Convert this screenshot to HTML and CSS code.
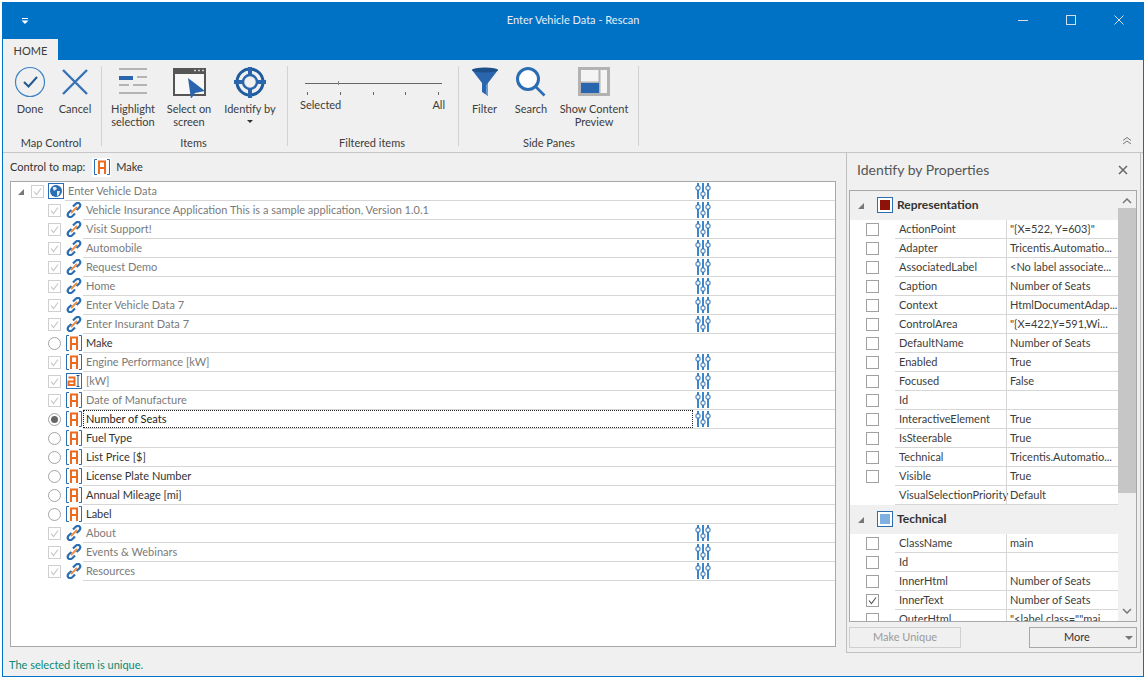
FILE: index.html
```html
<!DOCTYPE html>
<html lang="en">
<head>
<meta charset="utf-8">
<title>Enter Vehicle Data - Rescan</title>
<link rel="stylesheet" href="styles.css">
</head>
<body>
<svg class="defs" width="0" height="0">
  <symbol id="i-a" viewBox="0 0 16 16">
    <path d="M3 .5H.5v15H3M13 .5h2.500v15H13" fill="none" stroke="#2a6db3"/>
    <path d="M5 15V2.500h6V15M5 9h6" fill="none" stroke="#ee6a1f" stroke-width="2"/>
  </symbol>
  <symbol id="i-t" viewBox="0 0 16 16">
    <rect x=".5" y=".5" width="15" height="15" fill="none" stroke="#2a6db3"/>
    <path d="M2.500 4.500h6V12h-6V8.500h6" fill="none" stroke="#ee6a1f" stroke-width="2"/>
    <path d="M10.500 2.500h3M12 2.500v11M10.500 13.500h3" fill="none" stroke="#1f4e80"/>
  </symbol>
  <symbol id="i-link" viewBox="0 0 16 16">
    <path d="M7 4.500 9.500 2q2.300-2 4-.5t-.2 4L10.500 8" fill="none" stroke="#2a6db3" stroke-width="2.200"/>
    <path d="M9 11.500 6.500 14q-2.300 2-4 .5t.2-4L5.500 8" fill="none" stroke="#2a6db3" stroke-width="2.200"/>
    <path d="m5 11 6-6" stroke="#ee8a3a" stroke-width="1.800"/>
  </symbol>
  <symbol id="i-tune" viewBox="0 0 16 18">
    <path d="M3 1v16M8 1v16M13 1v16" stroke="#3a86c8" stroke-width="2"/>
    <g fill="#fff" stroke="#2a6db3"><rect x="1" y="4" width="4" height="4" rx="1"/><rect x="6" y="10" width="4" height="4" rx="1"/><rect x="11" y="4" width="4" height="4" rx="1"/></g>
  </symbol>
  <symbol id="i-chk" viewBox="0 0 13 13">
    <path d="M3 6.500 5.500 9.500 10 3.500" fill="none" stroke="currentColor" stroke-width="1.100"/>
  </symbol>
</svg>
<div class="window">
  <header class="titlebar">
    <div class="qat"><svg width="8" height="7" viewBox="0 0 8 7"><path d="M1 .5h6" stroke="#fff"/><path d="M.5 2.500h7L4 6z" fill="#fff"/></svg></div>
    <div class="title">Enter Vehicle Data - Rescan</div>
    <div class="winbtns">
      <div class="winbtn"><svg width="12" height="12" viewBox="0 0 12 12"><path d="M1 6.500h10" stroke="#d5dde6"/></svg></div>
      <div class="winbtn"><svg width="12" height="12" viewBox="0 0 12 12"><rect x="1.500" y="1.500" width="9" height="9" fill="none" stroke="#d5dde6"/></svg></div>
      <div class="winbtn"><svg width="12" height="12" viewBox="0 0 12 12"><path d="m1.500 1.500 9 9m0-9-9 9" stroke="#d5dde6"/></svg></div>
    </div>
  </header>
  <div class="tabrow"><div class="tab">HOME</div></div>

  <section class="ribbon">
    <div class="group g1">
      <div class="btns">
        <div class="btn w-done"><svg class="ic" width="32" height="32" viewBox="0 0 32 32"><circle cx="16" cy="16" r="14.500" fill="none" stroke="#3d84c6" stroke-width="1.200"/><path d="m10 16 4.500 4.500L23 11" fill="none" stroke="#23598f" stroke-width="2"/></svg><span>Done</span></div>
        <div class="btn w-cancel"><svg class="ic" width="32" height="32" viewBox="0 0 32 32"><path d="m4 4 24 24M28 4 4 28" stroke="#3674b5" stroke-width="2.400"/></svg><span>Cancel</span></div>
      </div>
      <div class="glabel">Map Control</div>
    </div>
    <div class="group g2">
      <div class="btns">
        <div class="btn w-high"><svg class="ic" width="32" height="32" viewBox="0 0 32 32"><path d="M2 3h28M20 11h10M2 19h10M16 19h14M2 27h28" stroke="#b4b4b4" stroke-width="2"/><rect x="2" y="10" width="14" height="4" fill="#2a66ae"/></svg><span>Highlight<br>selection</span></div>
        <div class="btn w-sel"><svg class="ic" width="34" height="32" viewBox="0 0 34 32"><rect x="2" y="3" width="31" height="26" fill="#f7f7f7" stroke="#555" stroke-width="2"/><rect x="2" y="2" width="31" height="6" fill="#555"/><path d="M22 4.500h2M26 4.500h2M30 4.500h2" stroke="#ccc" stroke-width="1.500"/><path d="m16 12 17 13-10 2-4 6z" fill="#2a66ae"/></svg><span>Select on<br>screen</span></div>
        <div class="btn w-id"><svg class="ic" width="34" height="32" viewBox="0 0 34 32"><circle cx="17" cy="16" r="13" fill="none" stroke="#1f5a9c" stroke-width="3"/><circle cx="17" cy="16" r="7" fill="none" stroke="#2a66ae" stroke-width="2.500"/><path d="M17 1v9M17 22v10M1 16h9M24 16h9" stroke="#2a66ae" stroke-width="4"/></svg><span>Identify by</span><i class="caret"></i></div>
      </div>
      <div class="glabel">Items</div>
    </div>
    <div class="group g3">
      <div class="slider">
        <div class="track"><i class="thumb"></i></div>
        <div class="ticks"><i></i><i></i><i></i><i></i><i></i></div>
        <div class="ends"><span>Selected</span><span>All</span></div>
      </div>
      <div class="glabel">Filtered items</div>
    </div>
    <div class="group g4">
      <div class="btns">
        <div class="btn w-filter"><svg class="ic" width="30" height="32" viewBox="0 0 30 32"><path d="M2 4h26L18 17v13l-6-4V17z" fill="#2a66ae"/><ellipse cx="15" cy="4" rx="13" ry="2.500" fill="#1d4f88"/><path d="M18 17v13l-2-2V19z" fill="#6a9bd0"/></svg><span>Filter</span></div>
        <div class="btn w-search"><svg class="ic" width="32" height="32" viewBox="0 0 32 32"><circle cx="13" cy="13" r="10.500" fill="#fff" stroke="#2a6db3" stroke-width="3"/><path d="m20.500 20.500 9 9" stroke="#2a6db3" stroke-width="2.600"/></svg><span>Search</span></div>
        <div class="btn w-show"><svg class="ic" width="32" height="32" viewBox="0 0 32 32"><rect x="1.500" y="2.500" width="29" height="26" fill="#f4f4f4" stroke="#b2b2b2" stroke-width="3"/><path d="M21.500 3v25M3 16.500h18" stroke="#b2b2b2" stroke-width="2"/><rect x="3" y="17" width="18" height="10" fill="#2a66ae"/></svg><span>Show Content<br>Preview</span></div>
      </div>
      <div class="glabel">Side Panes</div>
    </div>
    <svg class="collapse" width="10" height="8" viewBox="0 0 10 8"><path d="m1 3.500 4-3 4 3M1 7l4-3 4 3" fill="none" stroke="#777"/></svg>
  </section>

  <main class="body">
    <div class="left">
      <div class="mapline"><span>Control to map:</span><span class="mapicon"><svg width="16" height="16"><use href="#i-a"/></svg></span><span>Make</span></div>
      <div class="tree">
        <div class="row root"><i class="exp"></i><i class="chk"><svg width="13" height="13"><use href="#i-chk"/></svg></i><span class="globe"><svg width="16" height="16" viewBox="0 0 16 16"><rect x=".5" y=".5" width="15" height="15" fill="#fff" stroke="#2a6db3"/><circle cx="8" cy="8" r="6" fill="#2a6db3"/><path d="M5 4h3l1 2-3 2-1-2zM9 8h3l-1 4-2 1z" fill="#dfeaf6"/></svg></span><div class="cell dim"><span class="txt">Enter Vehicle Data</span><svg class="tune" width="16" height="18"><use href="#i-tune"/></svg></div></div>
        <div class="row"><i class="chk"><svg width="13" height="13"><use href="#i-chk"/></svg></i><svg class="ico" width="16" height="16"><use href="#i-link"/></svg><div class="cell dim"><span class="txt">Vehicle Insurance Application This is a sample application, Version 1.0.1</span><svg class="tune" width="16" height="18"><use href="#i-tune"/></svg></div></div>
        <div class="row"><i class="chk"><svg width="13" height="13"><use href="#i-chk"/></svg></i><svg class="ico" width="16" height="16"><use href="#i-link"/></svg><div class="cell dim"><span class="txt">Visit Support!</span><svg class="tune" width="16" height="18"><use href="#i-tune"/></svg></div></div>
        <div class="row"><i class="chk"><svg width="13" height="13"><use href="#i-chk"/></svg></i><svg class="ico" width="16" height="16"><use href="#i-link"/></svg><div class="cell dim"><span class="txt">Automobile</span><svg class="tune" width="16" height="18"><use href="#i-tune"/></svg></div></div>
        <div class="row"><i class="chk"><svg width="13" height="13"><use href="#i-chk"/></svg></i><svg class="ico" width="16" height="16"><use href="#i-link"/></svg><div class="cell dim"><span class="txt">Request Demo</span><svg class="tune" width="16" height="18"><use href="#i-tune"/></svg></div></div>
        <div class="row"><i class="chk"><svg width="13" height="13"><use href="#i-chk"/></svg></i><svg class="ico" width="16" height="16"><use href="#i-link"/></svg><div class="cell dim"><span class="txt">Home</span><svg class="tune" width="16" height="18"><use href="#i-tune"/></svg></div></div>
        <div class="row"><i class="chk"><svg width="13" height="13"><use href="#i-chk"/></svg></i><svg class="ico" width="16" height="16"><use href="#i-link"/></svg><div class="cell dim"><span class="txt">Enter Vehicle Data 7</span><svg class="tune" width="16" height="18"><use href="#i-tune"/></svg></div></div>
        <div class="row"><i class="chk"><svg width="13" height="13"><use href="#i-chk"/></svg></i><svg class="ico" width="16" height="16"><use href="#i-link"/></svg><div class="cell dim"><span class="txt">Enter Insurant Data 7</span><svg class="tune" width="16" height="18"><use href="#i-tune"/></svg></div></div>
        <div class="row"><i class="radio"></i><svg class="ico" width="16" height="16"><use href="#i-a"/></svg><div class="cell"><span class="txt">Make</span></div></div>
        <div class="row"><i class="chk"><svg width="13" height="13"><use href="#i-chk"/></svg></i><svg class="ico" width="16" height="16"><use href="#i-a"/></svg><div class="cell dim"><span class="txt">Engine Performance [kW]</span><svg class="tune" width="16" height="18"><use href="#i-tune"/></svg></div></div>
        <div class="row"><i class="chk"><svg width="13" height="13"><use href="#i-chk"/></svg></i><svg class="ico" width="16" height="16"><use href="#i-t"/></svg><div class="cell dim"><span class="txt">[kW]</span><svg class="tune" width="16" height="18"><use href="#i-tune"/></svg></div></div>
        <div class="row"><i class="chk"><svg width="13" height="13"><use href="#i-chk"/></svg></i><svg class="ico" width="16" height="16"><use href="#i-a"/></svg><div class="cell dim"><span class="txt">Date of Manufacture</span><svg class="tune" width="16" height="18"><use href="#i-tune"/></svg></div></div>
        <div class="row"><i class="radio on"></i><svg class="ico" width="16" height="16"><use href="#i-a"/></svg><div class="cell"><span class="txt focus">Number of Seats</span><svg class="tune" width="16" height="18"><use href="#i-tune"/></svg></div></div>
        <div class="row"><i class="radio"></i><svg class="ico" width="16" height="16"><use href="#i-a"/></svg><div class="cell"><span class="txt">Fuel Type</span></div></div>
        <div class="row"><i class="radio"></i><svg class="ico" width="16" height="16"><use href="#i-a"/></svg><div class="cell"><span class="txt">List Price [$]</span></div></div>
        <div class="row"><i class="radio"></i><svg class="ico" width="16" height="16"><use href="#i-a"/></svg><div class="cell"><span class="txt">License Plate Number</span></div></div>
        <div class="row"><i class="radio"></i><svg class="ico" width="16" height="16"><use href="#i-a"/></svg><div class="cell"><span class="txt">Annual Mileage [mi]</span></div></div>
        <div class="row"><i class="radio"></i><svg class="ico" width="16" height="16"><use href="#i-a"/></svg><div class="cell"><span class="txt">Label</span></div></div>
        <div class="row"><i class="chk"><svg width="13" height="13"><use href="#i-chk"/></svg></i><svg class="ico" width="16" height="16"><use href="#i-link"/></svg><div class="cell dim"><span class="txt">About</span><svg class="tune" width="16" height="18"><use href="#i-tune"/></svg></div></div>
        <div class="row"><i class="chk"><svg width="13" height="13"><use href="#i-chk"/></svg></i><svg class="ico" width="16" height="16"><use href="#i-link"/></svg><div class="cell dim"><span class="txt">Events &amp; Webinars</span><svg class="tune" width="16" height="18"><use href="#i-tune"/></svg></div></div>
        <div class="row"><i class="chk"><svg width="13" height="13"><use href="#i-chk"/></svg></i><svg class="ico" width="16" height="16"><use href="#i-link"/></svg><div class="cell dim"><span class="txt">Resources</span><svg class="tune" width="16" height="18"><use href="#i-tune"/></svg></div></div>
      </div>
    </div>

    <aside class="panel">
      <div class="phead"><span>Identify by Properties</span><svg width="10" height="10" viewBox="0 0 10 10"><path d="m1 1 8 8m0-8-8 8" stroke="#666" stroke-width="1.500"/></svg></div>
      <div class="grid">
        <div class="list">
          <div class="ghead"><i class="exp"></i><span class="swatch"><i class="red"></i></span><b>Representation</b></div>
          <div class="prop"><i class="box"></i><span class="n">ActionPoint</span><span class="v">"{X=522, Y=603}"</span></div>
          <div class="prop"><i class="box"></i><span class="n">Adapter</span><span class="v">Tricentis.Automatio...</span></div>
          <div class="prop"><i class="box"></i><span class="n">AssociatedLabel</span><span class="v">&lt;No label associate...</span></div>
          <div class="prop"><i class="box"></i><span class="n">Caption</span><span class="v">Number of Seats</span></div>
          <div class="prop"><i class="box"></i><span class="n">Context</span><span class="v">HtmlDocumentAdap...</span></div>
          <div class="prop"><i class="box"></i><span class="n">ControlArea</span><span class="v">"{X=422,Y=591,Wi...</span></div>
          <div class="prop"><i class="box"></i><span class="n">DefaultName</span><span class="v">Number of Seats</span></div>
          <div class="prop"><i class="box"></i><span class="n">Enabled</span><span class="v">True</span></div>
          <div class="prop"><i class="box"></i><span class="n">Focused</span><span class="v">False</span></div>
          <div class="prop"><i class="box"></i><span class="n">Id</span><span class="v"></span></div>
          <div class="prop"><i class="box"></i><span class="n">InteractiveElement</span><span class="v">True</span></div>
          <div class="prop"><i class="box"></i><span class="n">IsSteerable</span><span class="v">True</span></div>
          <div class="prop"><i class="box"></i><span class="n">Technical</span><span class="v">Tricentis.Automatio...</span></div>
          <div class="prop"><i class="box"></i><span class="n">Visible</span><span class="v">True</span></div>
          <div class="prop"><i class="nobox"></i><span class="n">VisualSelectionPriority</span><span class="v">Default</span></div>
          <div class="ghead"><i class="exp"></i><span class="swatch"><i class="blue"></i></span><b>Technical</b></div>
          <div class="prop"><i class="box"></i><span class="n">ClassName</span><span class="v">main</span></div>
          <div class="prop"><i class="box"></i><span class="n">Id</span><span class="v"></span></div>
          <div class="prop"><i class="box"></i><span class="n">InnerHtml</span><span class="v">Number of Seats</span></div>
          <div class="prop"><i class="box on"><svg width="13" height="13"><use href="#i-chk"/></svg></i><span class="n">InnerText</span><span class="v">Number of Seats</span></div>
          <div class="prop"><i class="box"></i><span class="n">OuterHtml</span><span class="v">"&lt;label class=""mai...</span></div>
        </div>
        <div class="scroll">
          <svg class="arrow" width="10" height="6" viewBox="0 0 10 6"><path d="m1 5 4-4 4 4" fill="none" stroke="#777" stroke-width="1.500"/></svg>
          <div class="sthumb"></div>
          <svg class="arrow end" width="10" height="6" viewBox="0 0 10 6"><path d="m1 1 4 4 4-4" fill="none" stroke="#777" stroke-width="1.500"/></svg>
        </div>
      </div>
      <div class="pfoot">
        <div class="pb off">Make Unique</div>
        <div class="pb more"><span>More</span><i class="drop"></i></div>
      </div>
    </aside>
  </main>
  <footer class="status">The selected item is unique.</footer>
</div>
</body>
</html>
```
FILE: styles.css
```css
* { box-sizing: border-box; }
html, body { margin: 0; height: 100%; background: #fff; }
body { padding: 2px 3px 2px 2px; font: 11px/16px Lato, Roboto, "Liberation Sans", sans-serif; color: #3c3c3c; overflow: hidden; }
i { display: block; font-style: normal; }
.defs { position: absolute; }

.window { height: 675px; border: 1px solid #0072c6; background: #f0f0f0; display: flex; flex-direction: column; }
.titlebar { height: 36px; background: #0072c6; display: grid; grid-template-columns: 1fr auto 1fr; align-items: center; color: #e8eef5; }
.qat { padding-left: 18px; display: flex; }
.title { padding-bottom: 2px; }
.winbtns { display: flex; justify-content: flex-end; }
.winbtn { width: 48px; height: 36px; display: flex; align-items: center; justify-content: center; padding-bottom: 2px; }
.tabrow { height: 21px; background: #0072c6; display: flex; }
.tab { width: 55px; background: #f0f0f0; text-align: center; line-height: 23px; color: #3c3c3c; }

.ribbon { height: 93px; display: flex; border-bottom: 1px solid #c6c6c6; padding-top: 6px; position: relative; }
.group { height: 80px; border-right: 1px solid #d2d2d2; display: flex; flex-direction: column; }
.g1 { width: 99px; padding-left: 6px; }
.g2 { width: 186px; padding-left: 3px; }
.g3 { width: 171px; }
.g4 { width: 180px; padding-left: 3px; }
.btns { display: flex; flex: 1; }
.btn { display: flex; flex-direction: column; align-items: center; text-align: center; line-height: 13px; }
.btn .ic { flex: none; margin-bottom: 4px; }
.btn span { display: block; white-space: nowrap; }
.w-done { width: 42px; }
.w-cancel { width: 48px; }
.w-high { width: 56px; }
.w-sel { width: 56px; }
.w-id { width: 66px; }
.w-filter { width: 45px; }
.w-search { width: 48px; }
.w-show { width: 78px; }
.caret { width: 0; height: 0; border: 3px solid transparent; border-top-color: #333; border-bottom: 0; margin-top: 5px; }
.glabel { text-align: center; height: 15px; line-height: 15px; margin: 0 2px -4px 0; }
.g1 .glabel { margin-left: -6px; }
.g2 .glabel { margin-left: -3px; }

.slider { flex: 1; padding: 17px 13px 0 12px; }
.track { height: 1px; background: #666; margin: 0 3px 0 5px; position: relative; }
.thumb { position: absolute; left: 33px; top: -2px; width: 1px; height: 4px; background: #888; }
.ticks { display: flex; justify-content: space-between; margin: 8px 6px 0 7px; height: 3px; }
.ticks i { width: 1px; height: 3px; background: #666; }
.ends { display: flex; justify-content: space-between; margin-top: 3px; line-height: 14px; }
.collapse { position: absolute; right: 11px; bottom: 7px; }

.body { flex: 1; display: flex; min-height: 0; }
.left { width: 843px; padding: 3px 10px 5px 7px; display: flex; flex-direction: column; }
.mapline { height: 22px; margin-bottom: 3px; display: flex; align-items: center; gap: 5px; color: #333; }
.mapicon { width: 19px; height: 19px; background: #fff; display: flex; align-items: center; justify-content: center; margin-left: 2px; }
.tree { flex: 1; background: #fff; border: 1px solid #a8a8a8; }
.row { height: 19px; display: flex; align-items: flex-start; padding-left: 37px; }
.row.root { padding-left: 5px; }
.exp { width: 0; height: 0; border-style: solid; border-width: 0 0 6px 6px; border-color: transparent transparent #777 transparent; margin: 7px 7px 0 2px; flex: none; }
.chk { width: 13px; height: 13px; margin-top: 3px; border: 1px solid #cfcfcf; color: #c4c4c4; flex: none; position: relative; }
.chk svg { position: absolute; left: -1px; top: -1px; }
.radio { width: 13px; height: 13px; margin-top: 3px; border: 1px solid #a4a4a4; border-radius: 50%; flex: none; background: #fff; }
.radio.on { display: flex; align-items: center; justify-content: center; }
.radio.on::after { content: ""; width: 7px; height: 7px; border-radius: 50%; background: #666; }
.ico { margin: 1px 1px 0 5px; flex: none; }
.globe { display: flex; margin: 1px 1px 0 4px; flex: none; }
.cell { flex: 1; height: 19px; border-bottom: 1px solid #d6d6d6; display: flex; align-items: flex-start; color: #333; }
.cell.dim { color: #7a7a7a; }
.txt { width: 610px; height: 18px; line-height: 18px; padding-left: 3px; white-space: nowrap; flex: none; }
.root .txt { width: 628px; }
.focus { outline: 1px dotted #222; outline-offset: -1px; color: #222; }
.tune { margin: 0 0 0 2px; flex: none; }

.panel { width: 295px; height: 500px; border: 1px solid #c0c0c0; border-top: 0; padding: 0 3px 0 2px; display: flex; flex-direction: column; }
.phead { height: 37px; display: flex; justify-content: space-between; align-items: center; padding: 0 9px 3px 8px; font-size: 14px; color: #555; }
.grid { height: 432px; border: 1px solid #a8a8a8; display: flex; background: #fff; }
.list { flex: 1; overflow: hidden; }
.ghead { height: 29px; background: #f0f0f0; display: flex; align-items: center; padding: 0 0 1px 8px; color: #333; }
.ghead b { font-size: 12px; }
.ghead .exp { margin: 1px 9px 0 0; }
.swatch { width: 16px; height: 16px; border: 1px solid #2a6db3; padding: 2px; margin-right: 4px; background: #fff; margin-left: 4px; }
.swatch i { width: 10px; height: 10px; }
.red { background: #8e1208; }
.blue { background: #7fb0e0; }
.prop { height: 19px; display: flex; padding-left: 16px; }
.prop:last-child { height: 22px; }
.box, .nobox { width: 13px; height: 13px; margin: 3px 16px 0 0; flex: none; }
.box { border: 1px solid #a0a0a0; background: #fff; color: #555; position: relative; }
.box svg { position: absolute; left: -1px; top: -1px; }
.n { width: 111px; height: 19px; border-bottom: 1px solid #d6d6d6; padding-left: 4px; line-height: 18px; white-space: nowrap; color: #3c3c3c; flex: none; }
.v { flex: 1; height: 19px; border-bottom: 1px solid #d6d6d6; border-left: 1px solid #d6d6d6; padding-left: 3px; line-height: 18px; white-space: nowrap; overflow: hidden; color: #3c3c3c; }
.scroll { width: 18px; background: #f0f0f0; display: flex; flex-direction: column; align-items: center; }
.arrow { margin-top: 7px; flex: none; }
.sthumb { width: 100%; height: 285px; background: #c6c6c6; margin-top: 4px; }
.arrow.end { margin-top: auto; margin-bottom: 7px; }
.pfoot { display: flex; justify-content: space-between; margin-top: 5px; }
.pb { height: 21px; border: 1px solid #a8a8a8; text-align: center; line-height: 18px; }
.pb.off { width: 112px; color: #9a9a9a; border-color: #d0d0d0; }
.pb.more { width: 108px; position: relative; color: #333; padding-right: 12px; }
.drop { position: absolute; right: 3px; top: 8px; width: 0; height: 0; border: 4px solid transparent; border-top-color: #777; border-bottom: 0; }

.status { height: 24px; line-height: 25px; padding-left: 6px; color: #0a8a70; }
```
